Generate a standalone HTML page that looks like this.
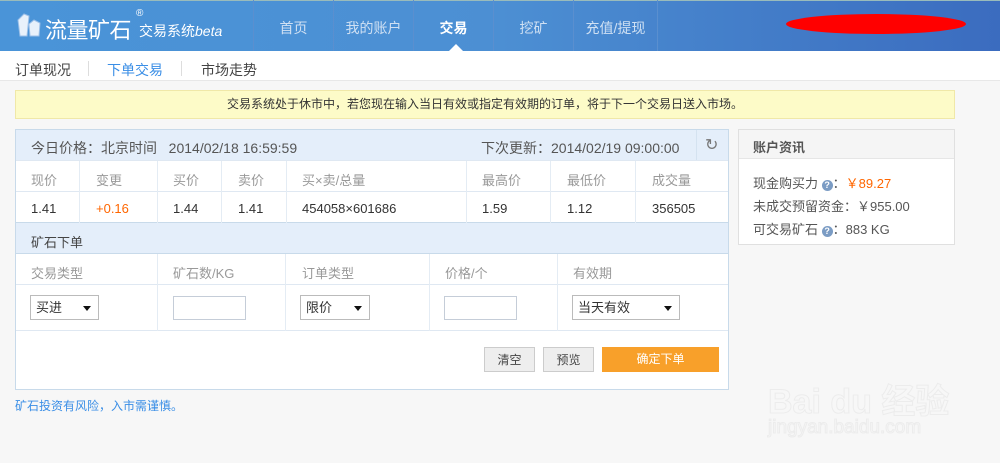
<!DOCTYPE html>
<html><head><meta charset="utf-8"><style>
*{margin:0;padding:0;box-sizing:border-box}
body{width:1000px;height:463px;overflow:hidden;background:#f7f7f7;font-family:"Liberation Sans","Noto Sans CJK SC",sans-serif;font-size:13px;color:#555;position:relative}
.abs{position:absolute}
.hdr{left:0;top:0;width:1000px;height:51px;background:linear-gradient(90deg,#4a94d8,#4c8fd3 50%,#3b6cbf);border-top:1px solid #9bb;}
.nav{top:0;height:51px;line-height:56px;color:#cfe0f3;font-size:14px;text-align:center;border-left:1px solid #5a8fcf}
.sub{left:0;top:51px;width:1000px;height:30px;background:#fff;border-bottom:1px solid #e8e8e8}
.t{position:absolute;white-space:nowrap}
.panel{left:15px;top:129px;width:714px;height:261px;background:#fff;border:1px solid #c8daea}
.row{position:absolute;left:0;width:712px;border-bottom:1px solid #dfe8f2}
.vl{position:absolute;width:1px;background:#e4ecf4}
.sel{position:absolute;height:25px;border:1px solid #bbb;background:#fff;font-size:13px;color:#333;padding-left:5px;line-height:23px}
.sel:after{content:"";position:absolute;right:7px;top:10px;border:4px solid transparent;border-top:5px solid #111}
.inp{position:absolute;height:24px;border:1px solid #c5cdd8;background:#fff}
.btn{position:absolute;top:347px;height:25px;line-height:24px;text-align:center;font-size:12px}
</style></head><body>
<div class="abs hdr"></div>
<svg class="abs" style="left:15px;top:12px" width="30" height="28"><path d="M3 8 L9 2 L14 4 L12 24 L5 24 Z" fill="#e8f1fb" stroke="#9cc0e8" stroke-width="1"/><path d="M14 12 L19 8 L25 11 L24 24 L15 24 Z" fill="#e8f1fb" stroke="#9cc0e8" stroke-width="1"/></svg>
<div class="t" style="left:45px;top:13px;font-size:22px;color:#fff;letter-spacing:-0.5px">流量矿石</div>
<div class="t" style="left:136px;top:8px;font-size:10px;color:#fff">®</div>
<div class="t" style="left:139px;top:21px;font-size:14px;color:#fff">交易系统<i>beta</i></div>
<div class="abs nav" style="left:253px;width:80px">首页</div>
<div class="abs nav" style="left:333px;width:80px">我的账户</div>
<div class="abs nav" style="left:413px;width:80px;color:#fff;font-weight:bold">交易</div>
<div class="abs nav" style="left:493px;width:80px">挖矿</div>
<div class="abs nav" style="left:573px;width:85px;border-right:1px solid #5a8fcf">充值/提现</div>
<div class="abs" style="left:449px;top:44px;border:7px solid transparent;border-bottom:7px solid #fff;border-top:0"></div>
<div class="abs" style="left:786px;top:14px;width:180px;height:20px;background:#f00;border-radius:50%"></div>
<div class="abs sub"></div>
<div class="t" style="left:15px;top:60px;font-size:14px;color:#444">订单现况</div>
<div class="abs" style="left:88px;top:61px;width:1px;height:15px;background:#ddd"></div>
<div class="t" style="left:107px;top:60px;font-size:14px;color:#3a8ee6">下单交易</div>
<div class="abs" style="left:181px;top:61px;width:1px;height:15px;background:#ddd"></div>
<div class="t" style="left:201px;top:60px;font-size:14px;color:#444">市场走势</div>
<div class="abs" style="left:15px;top:90px;width:940px;height:29px;background:#fdfbc8;border:1px solid #f0e8a8;text-align:center;line-height:27px;font-size:12px;color:#333">交易系统处于休市中，若您现在输入当日有效或指定有效期的订单，将于下一个交易日送入市场。</div>
<div class="abs panel">
 <div class="row" style="top:0;height:31px;background:#e4eefa"></div>
 <div class="t" style="left:15px;top:8px;font-size:14px">今日价格：北京时间&nbsp;&nbsp; 2014/02/18 16:59:59</div>
 <div class="t" style="left:465px;top:8px;font-size:14px">下次更新：2014/02/19 09:00:00</div>
 <div class="vl" style="left:680px;top:0;height:30px;background:#d4e2f0"></div>
 <div class="t" style="left:689px;top:5px;font-size:16px;color:#777">↻</div>
 <div class="row" style="top:31px;height:31px"></div>
 <div class="row" style="top:62px;height:31px;border-bottom:1px solid #c8daea"></div>
 <div class="vl" style="left:63px;top:31px;height:62px"></div><div class="vl" style="left:141px;top:31px;height:62px"></div><div class="vl" style="left:205px;top:31px;height:62px"></div><div class="vl" style="left:270px;top:31px;height:62px"></div><div class="vl" style="left:450px;top:31px;height:62px"></div><div class="vl" style="left:534px;top:31px;height:62px"></div><div class="vl" style="left:619px;top:31px;height:62px"></div>
 <div class="t" style="top:40px;left:15px;color:#999">现价</div><div class="t" style="top:40px;left:80px;color:#999">变更</div><div class="t" style="top:40px;left:157px;color:#999">买价</div><div class="t" style="top:40px;left:222px;color:#999">卖价</div><div class="t" style="top:40px;left:286px;color:#999">买×卖/总量</div><div class="t" style="top:40px;left:466px;color:#999">最高价</div><div class="t" style="top:40px;left:551px;color:#999">最低价</div><div class="t" style="top:40px;left:636px;color:#999">成交量</div>
 <div class="t" style="top:71px;left:15px;color:#333">1.41</div><div class="t" style="top:71px;left:80px;color:#f60">+0.16</div><div class="t" style="top:71px;left:157px;color:#333">1.44</div><div class="t" style="top:71px;left:222px;color:#333">1.41</div><div class="t" style="top:71px;left:286px;color:#333">454058×601686</div><div class="t" style="top:71px;left:466px;color:#333">1.59</div><div class="t" style="top:71px;left:551px;color:#333">1.12</div><div class="t" style="top:71px;left:636px;color:#333">356505</div>
 <div class="row" style="top:93px;height:31px;background:#e4eefa;border-bottom:1px solid #c8daea"></div>
 <div class="t" style="left:15px;top:102px;color:#444">矿石下单</div>
 <div class="row" style="top:124px;height:31px"></div>
 <div class="row" style="top:155px;height:46px"></div>
 <div class="vl" style="left:141px;top:124px;height:77px"></div><div class="vl" style="left:269px;top:124px;height:77px"></div><div class="vl" style="left:413px;top:124px;height:77px"></div><div class="vl" style="left:541px;top:124px;height:77px"></div>
 <div class="t" style="top:133px;left:15px;color:#999">交易类型</div><div class="t" style="top:133px;left:157px;color:#999">矿石数/KG</div><div class="t" style="top:133px;left:286px;color:#999">订单类型</div><div class="t" style="top:133px;left:429px;color:#999">价格/个</div><div class="t" style="top:133px;left:557px;color:#999">有效期</div>
</div>
<div class="sel" style="left:30px;top:295px;width:69px">买进</div>
<div class="inp" style="left:173px;top:296px;width:73px"></div>
<div class="sel" style="left:300px;top:295px;width:70px">限价</div>
<div class="inp" style="left:444px;top:296px;width:73px"></div>
<div class="sel" style="left:572px;top:295px;width:108px">当天有效</div>
<div class="btn" style="left:484px;width:51px;background:#eee;border:1px solid #ccc;color:#444">清空</div>
<div class="btn" style="left:543px;width:51px;background:#eee;border:1px solid #ccc;color:#444">预览</div>
<div class="btn" style="left:602px;width:117px;background:#f8a02a;color:#fff">确定下单</div>
<div class="t" style="left:15px;top:397px;color:#3a8ee6;font-size:12px">矿石投资有风险，入市需谨慎。</div>
<div class="abs" style="left:738px;top:129px;width:217px;height:116px;background:#fff;border:1px solid #e0e0e0"></div>
<div class="abs" style="left:739px;top:130px;width:215px;height:29px;background:#f5f5f5;border-bottom:1px solid #e6e6e6"></div>
<div class="t" style="left:753px;top:137px;font-weight:bold;color:#555">账户资讯</div>
<div class="t" style="left:753px;top:173px;color:#555">现金购买力 <span style="display:inline-block;width:11px;height:11px;border-radius:50%;background:#7b9cc4;color:#fff;font-size:9px;line-height:11px;text-align:center;font-weight:bold">?</span>：<span style="color:#f60">￥89.27</span></div>
<div class="t" style="left:753px;top:196px;color:#555">未成交预留资金：￥955.00</div>
<div class="t" style="left:753px;top:219px;color:#555">可交易矿石 <span style="display:inline-block;width:11px;height:11px;border-radius:50%;background:#7b9cc4;color:#fff;font-size:9px;line-height:11px;text-align:center;font-weight:bold">?</span>：883 KG</div>
<div class="t" style="left:768px;top:374px;font-size:34px;font-weight:bold;color:#f7f7f7;-webkit-text-stroke:1px #ececec">Bai du 经验</div>
<div class="t" style="left:768px;top:417px;font-size:19px;color:#f7f7f7;-webkit-text-stroke:1px #ececec">jingyan.baidu.com</div>
</body></html>
